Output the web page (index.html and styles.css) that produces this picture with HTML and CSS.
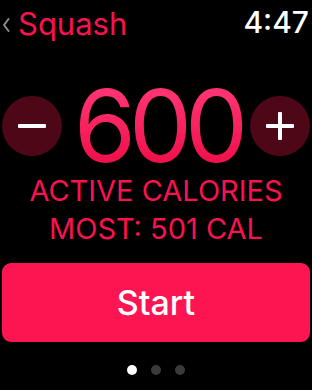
FILE: index.html
```html
<!DOCTYPE html>
<html>
<head>
<meta charset="utf-8">
<link rel="stylesheet" href="styles.css">
</head>
<body>
<div class="screen">
  <header class="header">
    <div class="back">
      <svg class="chev" width="8" height="16" viewBox="0 0 8 16"><path d="M6.5 2 L2 8 L6.5 14" fill="none" stroke="#8e8e93" stroke-width="2" stroke-linecap="round" stroke-linejoin="round"/></svg>
      <span class="title">Squash</span>
    </div>
    <span class="time">4:47</span>
  </header>
  <div class="stepper">
    <div class="round">
      <svg width="30" height="30" viewBox="0 0 30 30"><rect x="1" y="13" width="28" height="4" rx="1" fill="#fff"/></svg>
    </div>
    <div class="value">600</div>
    <div class="round">
      <svg width="30" height="30" viewBox="0 0 30 30"><rect x="1" y="13" width="28" height="4" rx="1" fill="#fff"/><rect x="13" y="1" width="4" height="28" rx="1" fill="#fff"/></svg>
    </div>
  </div>
  <div class="labels">
    <div>ACTIVE CALORIES</div>
    <div>MOST: 501 CAL</div>
  </div>
  <div class="start">Start</div>
  <div class="dots">
    <span class="dot on"></span>
    <span class="dot"></span>
    <span class="dot"></span>
  </div>
</div>
</body>
</html>
```
FILE: styles.css
```css
html, body {
  margin: 0;
  padding: 0;
  background: #000;
}
body {
  width: 312px;
  height: 390px;
  overflow: hidden;
  font-family: Inter, "Liberation Sans", sans-serif;
}
.screen {
  display: flex;
  flex-direction: column;
  padding: 0 2px;
}
.header {
  display: flex;
  justify-content: space-between;
  align-items: baseline;
  height: 44px;
  padding-top: 4px;
  box-sizing: border-box;
  line-height: 36px;
}
.back {
  display: flex;
  align-items: center;
  gap: 8px;
}
.chev {
  margin-top: 2px;
}
.title {
  font-size: 31px;
  color: #fa114f;
  font-weight: 400;
}
.time {
  font-size: 30px;
  color: #fff;
  font-weight: 500;
  margin-right: 1px;
}
.stepper {
  display: flex;
  justify-content: space-between;
  align-items: center;
  height: 60px;
  margin-top: 52px;
}
.round {
  width: 60px;
  height: 60px;
  border-radius: 50%;
  background: #4d0717;
  display: flex;
  align-items: center;
  justify-content: center;
}
.value {
  font-size: 100px;
  line-height: 90px;
  margin: -15px -3px -15px 0;
  font-weight: 400;
  letter-spacing: -7px;
  background: linear-gradient(#ff3370 15%, #f0124d 85%);
  -webkit-background-clip: text;
  background-clip: text;
  color: transparent;
  padding: 0 2px;
}
.labels {
  margin-top: 16px;
  text-align: center;
  font-size: 29px;
  line-height: 38px;
  color: #fa114f;
}
.start {
  margin-top: 15px;
  height: 79px;
  border-radius: 9px;
  background: #fd1552;
  color: #fff;
  font-size: 34px;
  font-weight: 500;
  display: flex;
  align-items: center;
  justify-content: center;
}
.dots {
  display: flex;
  justify-content: center;
  gap: 14px;
  margin-top: 23px;
}
.dot {
  width: 10px;
  height: 10px;
  border-radius: 50%;
  background: #3a3a3a;
}
.dot.on {
  background: #fff;
}
```
